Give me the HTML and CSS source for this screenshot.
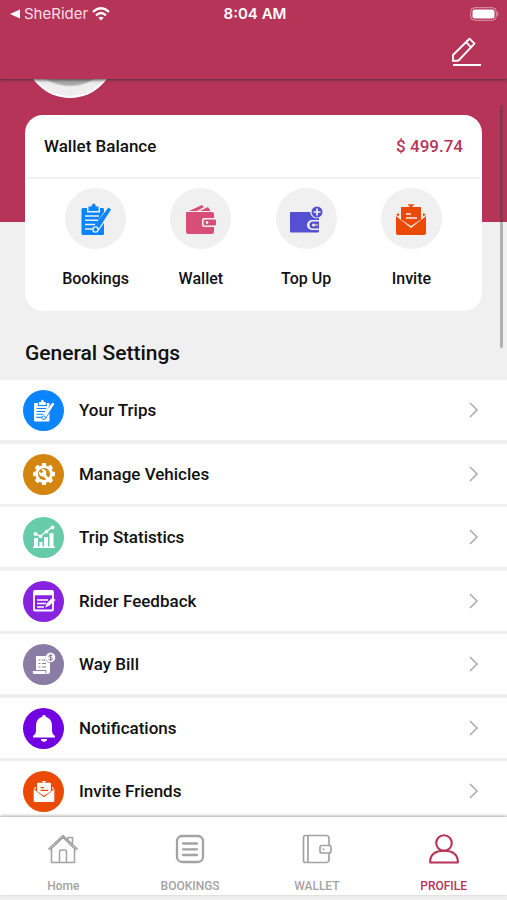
FILE: index.html
```html
<!DOCTYPE html>
<html lang="en">
<head>
<meta charset="utf-8">
<meta name="viewport" content="width=device-width, initial-scale=1">
<title>Profile</title>
<link rel="stylesheet" href="styles.css">
</head>
<body>
<svg class="sprite" aria-hidden="true">
  <symbol id="clipboard" viewBox="0 0 32 32">
    <path fill="currentColor" d="M3 5h4v4.500h13V5h3q1 0 1 1.500V31q0 1-1 1H3q-1.500 0-1.500-1.500v-24Q1.500 5 3 5zM8.500 3.500h3q.5-3 2.200-3t2.200 3h2.600V8h-10z"/>
    <path class="cut" d="M5 13h14M5 17.300h13M5 21.600h10M5 26h8" fill="none" stroke-width="1.500"/>
    <path class="cut" d="M29 7L16.500 25.500" stroke-width="6" fill="none"/>
    <path fill="currentColor" d="M28.500 4.500l2.500 2L18.500 26l-4 2.500-1.500-1.500 1-4z"/>
    <circle class="cut" cx="15.500" cy="26.500" r="2.600" fill="none" stroke-width="1.400"/>
  </symbol>
  <symbol id="envelope" viewBox="0 0 32 32">
    <path fill="currentColor" d="M6 4h8.500V2.500h-1.500V1.300h6v1.200h-1.500V4H26v12.500L16 23 6 16.500zM1 13l15 12 15-12v17a2 2 0 0 1-2 2H3a2 2 0 0 1-2-2zM1 11.500l3-1.500v3.500zM31 11.500L28 10v3.500z"/>
    <path class="cut" d="M11 11h5M11 15h11" fill="none" stroke-width="1.700"/>
  </symbol>
  <symbol id="chevron" viewBox="0 0 10 16">
    <path d="M1 1l7 7-7 7" fill="none" stroke="currentColor" stroke-width="1.500"/>
  </symbol>
</svg>
<div class="app">
  <header class="header">
    <div class="status">
      <div class="status-left">
        <svg width="10" height="10" viewBox="0 0 10 10"><path d="M0 5l10-4.500v9z" fill="#fff"/></svg>
        <span>SheRider</span>
        <svg width="18" height="14" viewBox="0 0 18 14" fill="none" stroke="#fff" stroke-width="2.300"><path d="M1 5q8-7.500 16 0M4 8.300q5-4.600 10 0"/><path d="M9 13.500L6.300 10.800q2.700-2.200 5.400 0z" fill="#fff" stroke="none"/></svg>
      </div>
      <span class="clock">8:04 AM</span>
      <div class="status-right">
        <svg width="30" height="14" viewBox="0 0 30 14"><rect x=".7" y=".7" width="25.600" height="12.600" rx="4" fill="none" stroke="#fff" stroke-opacity=".5"/><rect x="2.500" y="2.500" width="22" height="9" rx="2" fill="#fff"/><path d="M27.500 4.500q2 2.500 0 5z" fill="#fff" fill-opacity=".6"/></svg>
      </div>
    </div>
    <button class="edit" type="button" aria-label="Edit profile">
      <svg width="30" height="30" viewBox="0 0 30 30" fill="none" stroke="#fff" stroke-width="1.900" stroke-linejoin="round"><path d="M2 24v-6L18.500 1.700l5 5L7.500 23.500zM15 5.200l5 5M2 28h28"/></svg>
    </button>
  </header>

  <main class="content">
    <div class="cover">
      <div class="avatar"></div>
    </div>
    <section class="card">
      <div class="balance">
        <span>Wallet Balance</span>
        <span class="amount">$ 499.74</span>
      </div>
      <nav class="actions">
        <a href="#bookings" class="action blue"><span class="disc"><svg width="32" height="34"><use href="#clipboard"/></svg></span>Bookings</a>
        <a href="#wallet" class="action pink"><span class="disc">
          <svg width="32" height="32" viewBox="0 0 32 32"><path fill="currentColor" d="M4 8l13-6 2 2-7 4zM15 8l8-4 2 3v1zM2 9h25a2 2 0 0 1 2 2v4H19a2 2 0 0 0-2 2v5a2 2 0 0 0 2 2h10v5a2 2 0 0 1-2 2H3a2 2 0 0 1-2-2V9z"/><path fill="currentColor" d="M20 16.500h10a1 1 0 0 1 1 1v4a1 1 0 0 1-1 1H20a1.500 1.500 0 0 1-1.500-1.500v-3a1.500 1.500 0 0 1 1.500-1.500z"/><circle cx="22" cy="19.500" r="1.300" fill="#fff"/></svg></span>Wallet</a>
        <a href="#top-up" class="action indigo"><span class="disc">
          <svg width="34" height="32" viewBox="0 0 34 32"><path fill="currentColor" d="M2 9h19a7 7 0 0 0 9 6v2h-7a5 5 0 0 0 0 10h7v1a1.500 1.500 0 0 1-1.500 1.500H2.500A1.500 1.500 0 0 1 1 28V10a1 1 0 0 1 1-1z"/><path fill="currentColor" d="M30 18.500h-6a3.500 3.500 0 0 0 0 7h6z"/><circle cx="24.500" cy="22" r="1.500" fill="#f0f0f0"/><path d="M24 22h5" stroke="#f0f0f0"/><circle cx="28" cy="9" r="5.500" fill="currentColor"/><path d="M28 5.500v7M24.500 9h7" stroke="#f0f0f0" stroke-width="1.700"/></svg></span>Top Up</a>
        <a href="#invite" class="action orange"><span class="disc"><svg width="32" height="32"><use href="#envelope"/></svg></span>Invite</a>
      </nav>
    </section>

    <h2 class="heading">General Settings</h2>
    <ul class="list">
      <li><a href="#trips"><span class="badge trips"><svg width="22" height="23"><use href="#clipboard"/></svg></span>Your Trips<svg class="chevron"><use href="#chevron"/></svg></a></li>
      <li><a href="#vehicles"><span class="badge vehicles">
        <svg width="24" height="24" viewBox="-12 -12 24 24"><g fill="#fff"><circle r="8.800"/><rect x="-2.200" y="-11" width="4.400" height="22" rx="1"/><rect x="-2.200" y="-11" width="4.400" height="22" rx="1" transform="rotate(45)"/><rect x="-2.200" y="-11" width="4.400" height="22" rx="1" transform="rotate(90)"/><rect x="-2.200" y="-11" width="4.400" height="22" rx="1" transform="rotate(135)"/></g><circle r="6" class="tint"/><path d="M-1 0L4 5" stroke="#fff" stroke-width="3" stroke-linecap="round"/><path d="M-3-4.500a3.700 3.700 0 1 1-1.800 2l2.300 1.700 1.800-1.800z" fill="#fff"/></svg></span>Manage Vehicles<svg class="chevron"><use href="#chevron"/></svg></a></li>
      <li><a href="#statistics"><span class="badge statistics">
        <svg width="24" height="24" viewBox="0 0 24 24" fill="#fff"><path d="M2 13h4v9H2zM7.500 17h3v5h-3zM12 12h4v10h-4zM17.500 8h4v14h-4zM1 21.500h22V23H1z"/><path d="M3.500 9l5 2L14 7l6-5" fill="none" stroke="#fff" stroke-width="1.300"/><circle cx="3.500" cy="9" r="2"/><circle cx="8.500" cy="11.500" r="1.800"/><circle cx="14.500" cy="6.500" r="2"/><circle cx="20.500" cy="2.500" r="2"/></svg></span>Trip Statistics<svg class="chevron"><use href="#chevron"/></svg></a></li>
      <li><a href="#feedback"><span class="badge feedback">
        <svg width="24" height="24" viewBox="0 0 24 24" fill="none" stroke="#fff" stroke-width="1.800"><rect x="2" y="2" width="19" height="19.500" rx="1"/><path d="M2 4.500h19" stroke-width="3.500"/><path d="M5 11h11M5 14.500h9M5 18h7" stroke-width="1.700"/><path d="M13 18.500l2-4.500 5.500-5.500 3 2.500-6 5.500z" fill="#fff" stroke="none"/></svg></span>Rider Feedback<svg class="chevron"><use href="#chevron"/></svg></a></li>
      <li><a href="#way-bill"><span class="badge bill">
        <svg width="24" height="24" viewBox="0 0 24 24"><path fill="#fff" d="M4 4h10a5 5 0 0 0 4 7v9a2 2 0 0 1-2 2H3a2 2 0 0 1-2-3h3z"/><path class="tint-line" d="M6.500 8h2M10 8h3M6.500 11.500h2M10 11.500h4M6.500 15h2M10 15h4M2 18.500h12v3" fill="none"/><circle cx="18.500" cy="5.500" r="4.800" fill="#fff"/><path class="tint-line" d="M20.500 3.700q-3.800-1.400-3.800.4c0 1.600 3.800 1 3.800 2.700 0 1.700-3 1.300-4 .5M18.600 2.200v6.800" fill="none"/></svg></span>Way Bill<svg class="chevron"><use href="#chevron"/></svg></a></li>
      <li><a href="#notifications"><span class="badge notifications">
        <svg width="24" height="28" viewBox="0 0 24 28" fill="#fff"><path d="M10 3a2 2 0 0 1 4 0q5.500 1.500 6 8v6q0 3 3 5v1.500H1V22q3-2 3-5v-6q.5-6.500 6-8zM9 25h6a3 2.700 0 0 1-6 0z"/></svg></span>Notifications<svg class="chevron"><use href="#chevron"/></svg></a></li>
      <li><a href="#invite-friends"><span class="badge invite"><svg width="22" height="22"><use href="#envelope"/></svg></span>Invite Friends<svg class="chevron"><use href="#chevron"/></svg></a></li>
    </ul>
  </main>

  <nav class="tabs">
    <a href="#home"><svg width="30" height="30" viewBox="0 0 30 30" fill="none" stroke="currentColor" stroke-width="1.500"><path d="M1 14.500L15 1.500l14 13-1.500 1-12.500-12L2.500 15.500zM3.500 15v13.500h23V15M20 6V3.500h4.500V10M11.500 28.500V18q0-2 2-2h3q2 0 2 2v10.500"/></svg>Home</a>
    <a href="#bookings-tab"><svg width="30" height="30" viewBox="0 0 30 30" fill="none" stroke="currentColor" stroke-width="2.300"><rect x="2" y="2" width="26" height="26" rx="5"/><path d="M8 9.500h14M8 15.300h14M8 21h14" stroke-linecap="round"/></svg>BOOKINGS</a>
    <a href="#wallet-tab"><svg width="30" height="30" viewBox="0 0 30 30" fill="none" stroke="currentColor" stroke-width="1.700"><path d="M27 11V4a2.500 2.500 0 0 0-2.500-2.500h-21A2 2 0 0 0 1.500 3.500v23a2 2 0 0 0 2 2h21A2.500 2.500 0 0 0 27 26v-7M6 1.500v27"/><rect x="18" y="11.500" width="11" height="7.500" rx="2"/><path d="M20.500 15.300h2"/></svg>WALLET</a>
    <a href="#profile" class="active" aria-current="page"><svg width="30" height="30" viewBox="0 0 30 30" fill="none" stroke="currentColor" stroke-width="2.100" stroke-linejoin="round"><circle cx="15" cy="9" r="7.800"/><path d="M1.200 28.500v-2q1-9.700 13.800-9.700t13.800 9.700v2z"/></svg>PROFILE</a>
  </nav>
  <div class="scroll-thumb"></div>
</div>
</body>
</html>
```
FILE: styles.css
```css
* { box-sizing: border-box; }

body {
  margin: 0;
  background: #f0f0f0;
  color: #111;
  font: 500 17px/20px Roboto, "Liberation Sans", sans-serif;
}

a { color: inherit; text-decoration: none; }

.sprite { position: absolute; width: 0; height: 0; }

.app {
  position: relative;
  display: flex;
  flex-direction: column;
  height: 100vh;
  padding-bottom: 5px;
}

.header {
  position: relative;
  z-index: 1;
  display: flex;
  flex-direction: column;
  align-items: flex-end;
  background: #b73459;
  color: #fff;
  padding-bottom: 12px;
  box-shadow: 0 1px 3px rgba(60, 50, 60, 0.9);
}

.status {
  display: grid;
  grid-template-columns: 1fr auto 1fr;
  align-items: center;
  align-self: stretch;
  height: 28px;
  padding: 0 7px 0 10px;
  font: 400 15px/20px Inter, Roboto, sans-serif;
}

.status-left { display: flex; align-items: center; gap: 4px; }
.status-left span { color: #f8dfe6; }
.clock { font-weight: 600; }
.status-right { display: flex; justify-content: flex-end; }

.edit {
  margin: 9px 26px 0 0;
  padding: 0;
  border: 0;
  background: none;
  line-height: 0;
}

.edit svg { display: block; }

.content { flex: 1; min-height: 0; overflow: hidden; }

.cover { height: 143px; background: #b73459; overflow: hidden; }

.avatar {
  width: 90px;
  height: 90px;
  margin: -71px 0 0 25px;
  border-radius: 50%;
  background: radial-gradient(ellipse 44px 40px at 50% 43%, #aaa 94%, #eee 100%);
  border: 2px solid #fff;
}

.card {
  margin: -107px 25px 0;
  background: #fff;
  border-radius: 18px;
}

.balance {
  display: flex;
  justify-content: space-between;
  margin: 0 2px;
  padding: 21px 17px;
  border-bottom: 2px solid #f1f1f1;
}

.amount { color: #b73459; }

.actions {
  display: grid;
  grid-template-columns: repeat(4, 1fr);
  padding: 9px 18px 22px;
  font-size: 16px;
}

.action {
  --cut: #f0f0f0;
  display: flex;
  flex-direction: column;
  align-items: center;
  gap: 20px;
}

.disc {
  display: grid;
  place-items: center;
  width: 61px;
  height: 61px;
  border-radius: 50%;
  background: #f0f0f0;
}

.cut { stroke: var(--cut); }
.blue .disc { color: #0a84ff; }
.pink .disc { color: #d84d7a; }
.indigo .disc { color: #554fd2; }
.orange .disc { color: #eb4a05; }

.heading { margin: 30px 25px 15px; font: 500 21px/24px Roboto, sans-serif; }

.list { margin: 0; padding: 0; list-style: none; }
.list li { border-bottom: 4px solid #f0f0f0; }
.list li:nth-child(even) { border-bottom-width: 3px; }

.list a {
  display: flex;
  align-items: center;
  gap: 15px;
  height: 60px;
  padding: 0 28px 0 23px;
  background: #fff;
}

.badge {
  display: grid;
  place-items: center;
  width: 41px;
  height: 41px;
  border-radius: 50%;
  background: var(--cut);
  color: #fff;
}

.tint { fill: var(--cut); }
.tint-line { stroke: var(--cut); stroke-width: 1; }

.trips { --cut: #0a84ff; }
.vehicles { --cut: #d2850f; }
.statistics { --cut: #66cba8; }
.feedback { --cut: #8722df; }
.bill { --cut: #8a7ca5; }
.notifications { --cut: #7100e2; }
.invite { --cut: #eb4a05; }

.chevron { width: 10px; height: 16px; margin-left: auto; color: #aaa; }

.tabs {
  position: relative;
  display: grid;
  grid-template-columns: repeat(4, 1fr);
  background: #fff;
  box-shadow: 0 -1px 3px rgba(0, 0, 0, 0.35);
  color: #a3a3a3;
  font-size: 12px;
  line-height: 16px;
}

.tabs a {
  display: flex;
  flex-direction: column;
  align-items: center;
  gap: 14px;
  padding: 17px 0 1px;
}

.tabs .active { color: #b73459; }

.scroll-thumb {
  position: absolute;
  top: 105px;
  right: 4px;
  width: 3px;
  height: 243px;
  border-radius: 2px;
  background: rgba(60, 60, 60, 0.35);
}
```
